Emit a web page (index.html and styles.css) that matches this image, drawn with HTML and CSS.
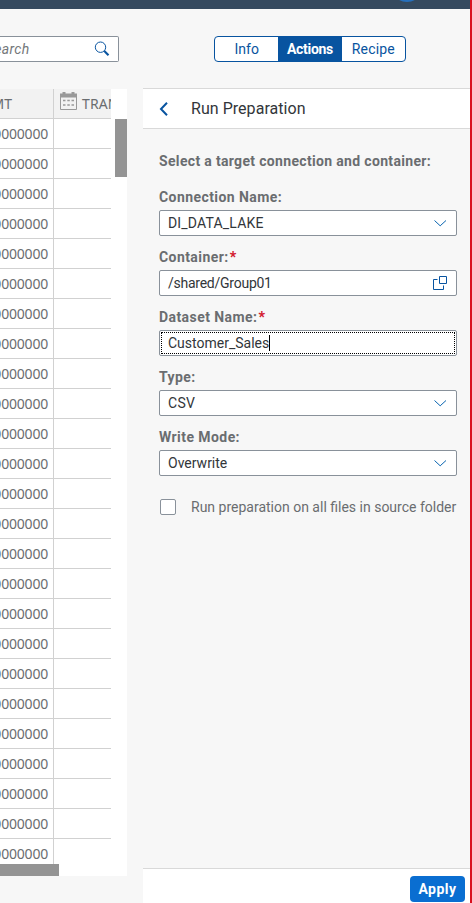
FILE: index.html
```html
<!DOCTYPE html>
<html lang="en">
<head>
<meta charset="utf-8">
<title>Run Preparation</title>
<link rel="stylesheet" href="styles.css">
</head>
<body>
<header class="shell"><span class="avatar"></span></header>
<main class="workspace">
  <section class="data">
    <div class="search"><span class="search-text">Search</span>
      <svg class="search-icon" width="16" height="16" viewBox="0 0 16 16"><circle cx="6.500" cy="6.200" r="5.200" fill="none" stroke="#0854a0"/><path d="M10.300 10l4.200 4.200" stroke="#0854a0" stroke-width="2.100"/></svg>
    </div>
    <div class="table">
      <div class="grid">
        <div class="row head"><div class="cell amount"><span>AMT</span></div><div class="cell date">
          <svg width="17" height="18" viewBox="0 0 17 18"><path d="M.5 2.500h16v15H.5z" fill="none" stroke="#999"/><path d="M0 1.500h17v4H0z" fill="#999"/><path d="M2.500 0h3v3h-3zM11.500 0h3v3h-3z" fill="#999"/><path d="M3 8.500h2.500M7.300 8.500h2.500M11.500 8.500H14M3 13h2.500M7.300 13h2.500M11.500 13H14" stroke="#999" stroke-width="1.500"/></svg>
          <span>TRAN</span></div></div>
        <div id="rows"></div>
      </div>
      <span class="vbar"></span><span class="hbar"></span>
    </div>
  </section>
  <section class="side">
    <nav class="tabs"><span class="tab info">Info</span><span class="tab active">Actions</span><span class="tab recipe">Recipe</span></nav>
    <div class="panel">
      <div class="title-bar"><svg width="9" height="14" viewBox="0 0 9 14"><path d="M8 .8L2 7l6 6.200" fill="none" stroke="#0854a0" stroke-width="2"/></svg><h1>Run Preparation</h1></div>
      <form class="form">
        <p class="intro">Select a target connection and container:</p>
        <label class="label l-conn">Connection Name:</label>
        <div class="field"><span class="f-conn">DI_DATA_LAKE</span><svg width="14" height="8" viewBox="0 0 14 8"><path d="M1.500 1.500l5.700 5.300L13 1.500" fill="none" stroke="#0864b0"/></svg></div>
        <label class="label l-cont">Container:<b>*</b></label>
        <div class="field"><span class="f-cont">/shared/Group01</span><svg class="help" width="15" height="15" viewBox="0 0 15 15"><path d="M6.500 .5h7v7h-7zM4.500 3.500h-4v10h10v-4" fill="none" stroke="#0854a0"/></svg></div>
        <label class="label l-data">Dataset Name:<b>*</b></label>
        <div class="field focused"><span class="f-data">Customer_Sales</span><i class="caret"></i></div>
        <label class="label l-type">Type:</label>
        <div class="field"><span class="f-type">CSV</span><svg width="14" height="8" viewBox="0 0 14 8"><path d="M1.500 1.500l5.700 5.300L13 1.500" fill="none" stroke="#0864b0"/></svg></div>
        <label class="label l-mode">Write Mode:</label>
        <div class="field"><span class="f-mode">Overwrite</span><svg width="14" height="8" viewBox="0 0 14 8"><path d="M1.500 1.500l5.700 5.300L13 1.500" fill="none" stroke="#0864b0"/></svg></div>
        <div class="check"><span class="box"></span><span class="check-text">Run preparation on all files in source folder</span></div>
      </form>
      <footer class="footer"><span class="apply">Apply</span></footer>
    </div>
  </section>
</main>
<script src="rows.js"></script>
</body>
</html>
```
FILE: rows.js
```js
const rows = document.getElementById('rows');
for (let i = 0; i < 25; i++) {
  const row = document.createElement('div');
  row.className = 'row';
  row.innerHTML = '<div class="cell amount"><span class="num">0000000</span></div><div class="cell date"></div>';
  rows.append(row);
}
```
FILE: styles.css
```css
* { box-sizing: border-box; }
body { margin: 0; width: 472px; height: 903px; overflow: hidden; background: #f7f7f7; border-right: 2px solid #d9101f; font: 14px/20px Roboto, "Noto Sans", sans-serif; color: #32363a; }
.shell { height: 9px; background: #354a5f; overflow: hidden; position: relative; }
.avatar { position: absolute; left: 391px; top: -30px; width: 32px; height: 32px; border-radius: 50%; background: #2670bd; }
.workspace { display: flex; height: 894px; }
.data { width: 127px; margin-right: 16px; padding-top: 27px; }
.search { width: 119px; height: 26px; border: 1px solid #89919a; border-left: 0; border-radius: 0 2px 2px 0; background: #fff; display: flex; align-items: center; justify-content: space-between; padding-right: 8px; margin-bottom: 27px; overflow: hidden; }
.search-text { margin-left: -14px; font-style: italic; color: #74777a; letter-spacing: .3px; }
.table { height: 787px; background: #fff; position: relative; overflow: hidden; font-family: "Noto Sans", sans-serif; color: #6a6d70; }
.grid { width: 111px; height: 775px; overflow: hidden; }
.row { height: 30px; display: flex; border-bottom: 1px solid #d1d1d1; }
.cell { display: flex; align-items: center; overflow: hidden; }
.amount { width: 54px; border-right: 1px solid #d1d1d1; justify-content: flex-end; padding-right: 5px; flex: none; }
.num { letter-spacing: -.2px; }
.date { flex: 1; }
.head { background: #f2f2f2; }
.head .amount { padding-right: 41px; }
.head .date { padding-left: 6px; }
.head svg { flex: none; margin: -5px 5px 0 0; }
.head .date span { font-size: 14px; letter-spacing: .1px; }
.vbar { position: absolute; right: 0; top: 30px; width: 12px; height: 58px; background: #949494; }
.hbar { position: absolute; left: 0; bottom: 0; width: 59px; height: 12px; background: #949494; }
.side { width: 327px; display: flex; flex-direction: column; padding-top: 27px; }
.tabs { display: flex; width: 192px; height: 26px; margin: 0 0 26px 71px; border: 1px solid #0854a0; border-radius: 4px; overflow: hidden; background: #fff; color: #0854a0; }
.tab { flex: 1; text-align: center; line-height: 25px; }
.active { background: #0854a0; color: #fff; font-weight: 700; letter-spacing: -.3px; }
.recipe { letter-spacing: .15px; }
.panel { flex: 1; display: flex; flex-direction: column; border-top: 1px solid #d9d9d9; }
.title-bar { height: 40px; flex: none; background: #fff; border-bottom: 1px solid #d9d9d9; display: flex; align-items: center; padding-left: 16px; }
h1 { margin: 0 0 0 23px; font-size: 16px; font-weight: 400; letter-spacing: .04px; }
.form { flex: 1; padding: 22px 13px 0 16px; }
.intro { margin: 0 0 16px; font-weight: 700; color: #6a6d70; white-space: nowrap; letter-spacing: .33px; }
.label { display: block; height: 20px; margin-bottom: 3px; font-weight: 700; color: #6a6d70; letter-spacing: .43px; }
.label b { color: #d32030; margin-left: 1px; }
.field { height: 26px; margin-bottom: 11px; background: #fff; border: 1px solid #89919a; border-radius: 2px; display: flex; align-items: center; padding: 0 9px 0 8px; position: relative; }
.field svg { margin-left: auto; }
.field .help { margin-right: -1px; }
.f-conn { letter-spacing: .18px; }
.f-cont { letter-spacing: -.25px; }
.f-type { letter-spacing: .3px; }
.focused::after { content: ""; position: absolute; inset: 1px; border: 1px dotted #000; }
.caret { width: 1px; height: 16px; background: #000; }
.check { display: flex; align-items: center; padding-top: 10px; }
.box { width: 16px; height: 16px; margin: 0 15px 0 1px; border: 1px solid #89919a; border-radius: 2px; background: #fff; flex: none; }
.check-text { color: #6a6d70; white-space: nowrap; }
.footer { height: 35px; background: #fff; border-top: 1px solid #d9d9d9; display: flex; justify-content: flex-end; padding: 7px 5px 0 0; }
.apply { width: 55px; height: 26px; border-radius: 4px; background: #0a6ed1; color: #fff; font-weight: 700; text-align: center; line-height: 26px; letter-spacing: .5px; }
```
